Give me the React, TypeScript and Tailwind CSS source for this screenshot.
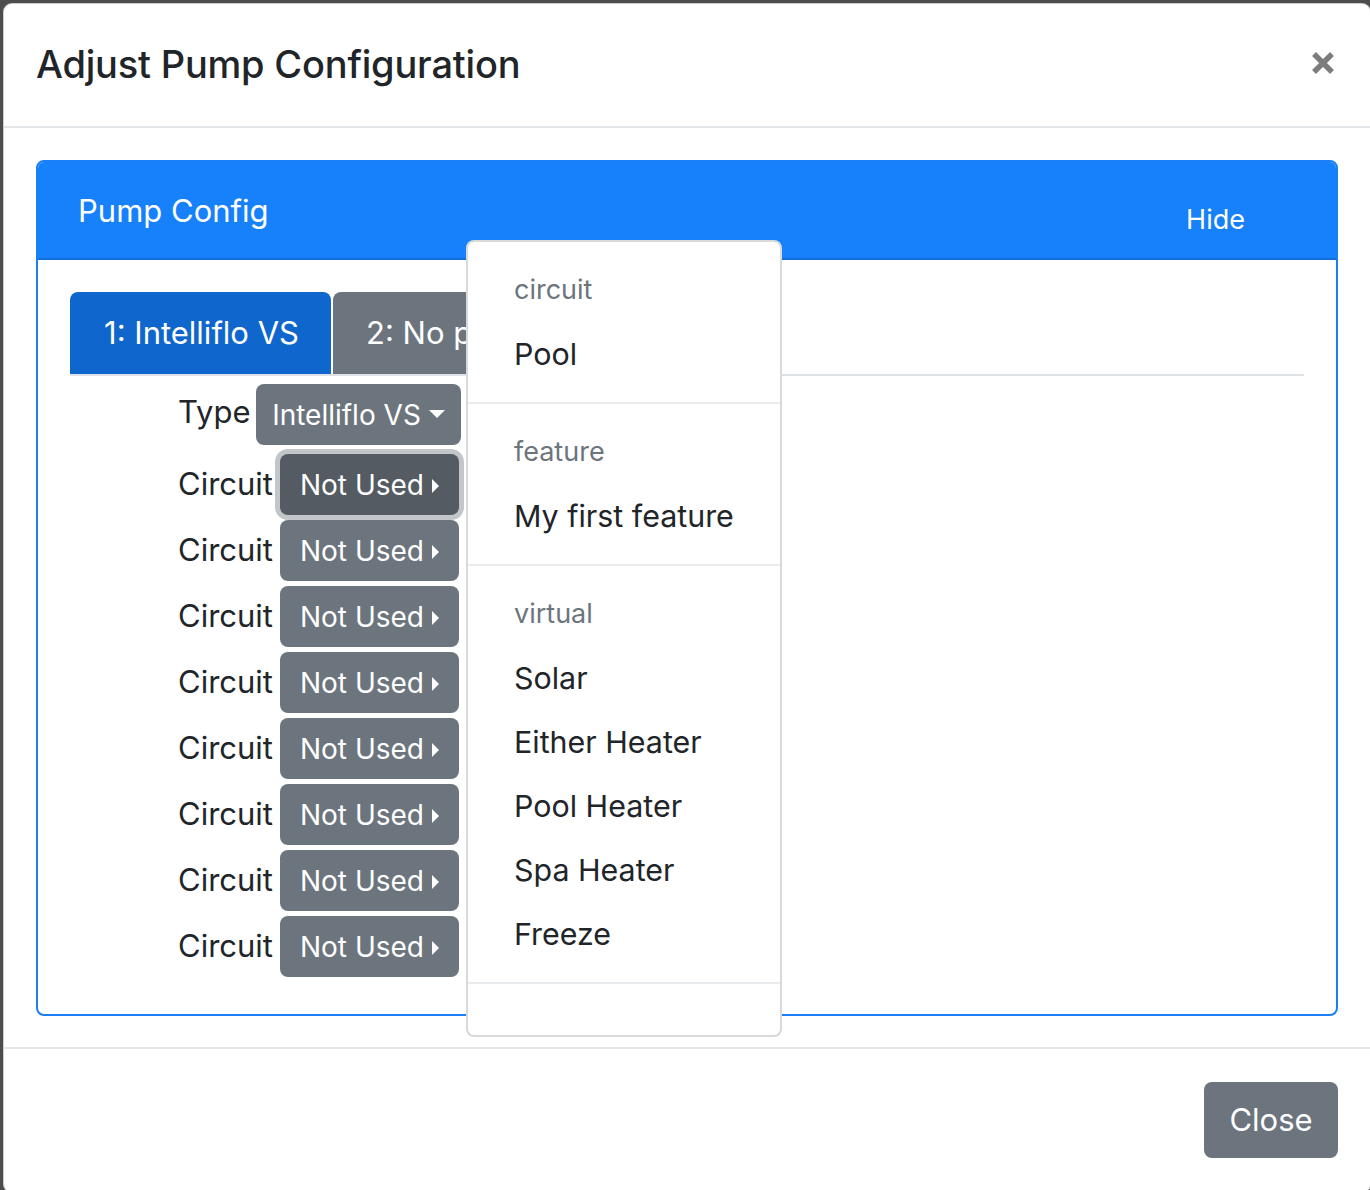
const font = { fontFamily: "Inter, 'Noto Sans', sans-serif" };

function CircuitRow({ active }: { active?: boolean }) {
  return (
    <div className="flex items-center h-[61px] mt-[5px]">
      <span className="w-[102px] text-[31px] text-[#212529]">Circuit</span>
      <button
        className={
          "flex items-center h-[61px] w-[179px] justify-center rounded-[8px] text-white text-[28px] " +
          (active
            ? "bg-[#545b62] shadow-[0_0_0_5px_#c3c6c9]"
            : "bg-[#6c757d]")
        }
      >
        <span>Not Used</span>
        <span className="ml-[8px] mt-[2px] w-0 h-0 border-y-[7px] border-y-transparent border-l-[7px] border-l-white" />
      </button>
    </div>
  );
}

function MenuHeader({ label }: { label: string }) {
  return (
    <div className="h-[64px] leading-[64px] pl-[46px] text-[27px] text-[#6c757d]">
      {label}
    </div>
  );
}

function MenuItem({ label }: { label: string }) {
  return (
    <div className="h-[64px] leading-[64px] pl-[46px] text-[30.4px] text-[#212529]">
      {label}
    </div>
  );
}

function Divider() {
  return (
    <div className="h-[34px] flex items-center">
      <div className="h-[2px] w-full bg-[#e9ecef]" />
    </div>
  );
}

export default function App() {
  return (
    <div
      className="relative w-[1370px] h-[1190px] overflow-hidden bg-[#4d4d4d] pl-[3px] pt-[3px]"
      style={font}
    >
      {/* modal */}
      <div className="w-[1368px] h-[1190px] bg-white rounded-[9px] border border-black/20 flex flex-col">
        {/* header */}
        <div className="flex items-start justify-between h-[124px] px-[32px] pt-[30px] border-b-2 border-[#e3e6e9]">
          <h5 className="text-[38px] font-medium leading-[60px] text-[#212529] tracking-[-0.2px]">
            Adjust Pump Configuration
          </h5>
          <svg width="24" height="24" viewBox="0 0 24 24" className="mt-[17px] mr-[3px]">
            <path d="M3 3 L21 21 M21 3 L3 21" stroke="#7d7d7d" strokeWidth="5.5" strokeLinecap="butt" />
          </svg>
        </div>

        {/* body */}
        <div className="pt-[32px] px-[32px] pb-[31px]">
          <div className="h-[856px] rounded-[8px] border-2 border-[#1a7ef5] flex flex-col">
            <div className="flex justify-between h-[98px] bg-[#1780fb] border-b-2 border-[#156fd9] px-[40px] rounded-t-[6px]">
              <div className="text-white text-[31px] leading-[98px]">Pump Config</div>
              <div className="text-white text-[27px] leading-[98px] mt-[9px] mr-[51px]">Hide</div>
            </div>
            <div className="pt-[32px] pl-[32px] pr-[32px]">
              {/* tabs */}
              <div className="flex border-b-2 border-[#dee2e6]">
                <div className="h-[82px] w-[261px] rounded-t-[8px] bg-[#0f66cc] text-white text-[31px] flex items-center justify-center pl-[2px]">
                  1: Intelliflo VS
                </div>
                <div className="h-[82px] w-[134px] ml-[2px] pl-[33px] rounded-tl-[8px] bg-[#6c757d] text-white text-[31px] flex items-center overflow-hidden">
                  <span className="block w-full overflow-hidden whitespace-nowrap">2: No pump</span>
                </div>
              </div>

              <div className="pl-[108px]">
                <div className="flex items-center h-[61px] mt-[8px]">
                  <span className="w-[78px] text-[31px] text-[#212529] -mt-[4px]">Type</span>
                  <button className="flex items-center h-[61px] w-[205px] justify-center rounded-[8px] bg-[#6c757d] text-white text-[28px]">
                    <span>Intelliflo VS</span>
                    <span className="ml-[8px] mt-[-2px] w-0 h-0 border-x-[8px] border-x-transparent border-t-[8px] border-t-white" />
                  </button>
                </div>
                <div className="h-[4px]" />
                <CircuitRow active />
                <CircuitRow />
                <CircuitRow />
                <CircuitRow />
                <CircuitRow />
                <CircuitRow />
                <CircuitRow />
                <CircuitRow />
              </div>
            </div>
          </div>
        </div>

        {/* footer */}
        <div className="border-t-2 border-[#e3e6e9] flex justify-end px-[32px] pt-[33px]">
          <button className="h-[76px] w-[134px] rounded-[8px] bg-[#6c757d] text-white text-[31px]">
            Close
          </button>
        </div>
      </div>

      {/* open dropdown menu */}
      <div className="absolute left-[466px] top-[240px] w-[316px] h-[797px] bg-white border-2 border-black/15 rounded-[8px] pt-[16px]">
        <MenuHeader label="circuit" />
        <MenuItem label="Pool" />
        <Divider />
        <MenuHeader label="feature" />
        <MenuItem label="My first feature" />
        <Divider />
        <MenuHeader label="virtual" />
        <MenuItem label="Solar" />
        <MenuItem label="Either Heater" />
        <MenuItem label="Pool Heater" />
        <MenuItem label="Spa Heater" />
        <MenuItem label="Freeze" />
        <Divider />
      </div>
    </div>
  );
}
